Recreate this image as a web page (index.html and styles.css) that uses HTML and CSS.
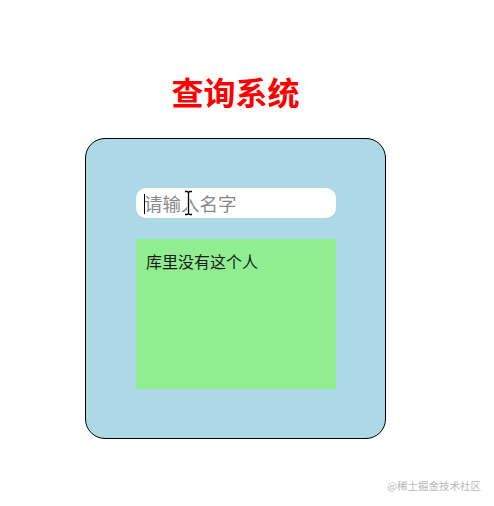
FILE: index.html
```html
<!DOCTYPE html>
<html lang="zh">
<head>
<meta charset="utf-8">
<title>查询系统</title>
<link rel="stylesheet" href="styles.css">
</head>
<body>
<div class="page">
  <div class="wrap">
    <h1 class="title">查询系统</h1>
    <div class="panel">
      <div class="field">
        <input class="search" type="text" placeholder="请输入名字">
        <span class="caret"></span>
        <svg class="ibeam" width="9" height="26" viewBox="0 0 9 26">
          <path d="M1 1.5 H3 Q4.5 1.5 4.5 3 Q4.5 1.5 6 1.5 H8 M4.5 3 V23 M1 24.5 H3 Q4.5 24.5 4.5 23 Q4.5 24.5 6 24.5 H8" fill="none" stroke="#fff" stroke-width="3" stroke-linecap="round"/>
          <path d="M1 1.5 H3 Q4.5 1.5 4.5 3 Q4.5 1.5 6 1.5 H8 M4.5 3 V23 M1 24.5 H3 Q4.5 24.5 4.5 23 Q4.5 24.5 6 24.5 H8" fill="none" stroke="#000" stroke-width="1.3"/>
        </svg>
      </div>
      <div class="result">库里没有这个人</div>
    </div>
  </div>
  <div class="watermark">@稀土掘金技术社区</div>
</div>
</body>
</html>
```

FILE: styles.css
```css
html, body {
  margin: 0;
  padding: 0;
  background: #ffffff;
}

body {
  font-family: "Noto Sans CJK SC", "Noto Sans", sans-serif;
}

.page {
  position: relative;
  width: 494px;
  height: 506px;
  padding-top: 68px;
  box-sizing: border-box;
}

.wrap {
  margin-left: 85px;
  width: 301px;
  display: flex;
  flex-direction: column;
}

.title {
  margin: 0 0 24px 0;
  font-size: 32px;
  line-height: 46px;
  font-weight: 700;
  color: #ff0000;
  text-align: center;
}

.panel {
  box-sizing: border-box;
  width: 301px;
  height: 301px;
  border: 1px solid #000;
  border-radius: 20px;
  background: #add8e6;
  padding: 49px 0 0 50px;
  display: flex;
  flex-direction: column;
  gap: 21px;
}

.field {
  position: relative;
  width: 200px;
  height: 30px;
}

.search {
  box-sizing: border-box;
  width: 200px;
  height: 30px;
  border: none;
  outline: none;
  border-radius: 10px;
  background: #ffffff;
  padding: 0 0 0 8px;
  font-family: "Noto Sans CJK SC", sans-serif;
  font-size: 18.5px;
  color: #333;
}

.search::placeholder {
  color: #8a8a8a;
}

.caret {
  position: absolute;
  left: 8px;
  top: 6px;
  width: 1px;
  height: 20px;
  background: #000;
}

.ibeam {
  position: absolute;
  left: 48px;
  top: 2px;
}

.result {
  box-sizing: border-box;
  width: 200px;
  height: 150px;
  background: #90ee90;
  padding: 10px 10px;
  font-size: 16px;
  line-height: 24px;
  color: #1a1a1a;
}

.watermark {
  position: absolute;
  right: 13px;
  bottom: 13px;
  font-size: 10.5px;
  line-height: 14px;
  color: #b8b8b8;
}
```
